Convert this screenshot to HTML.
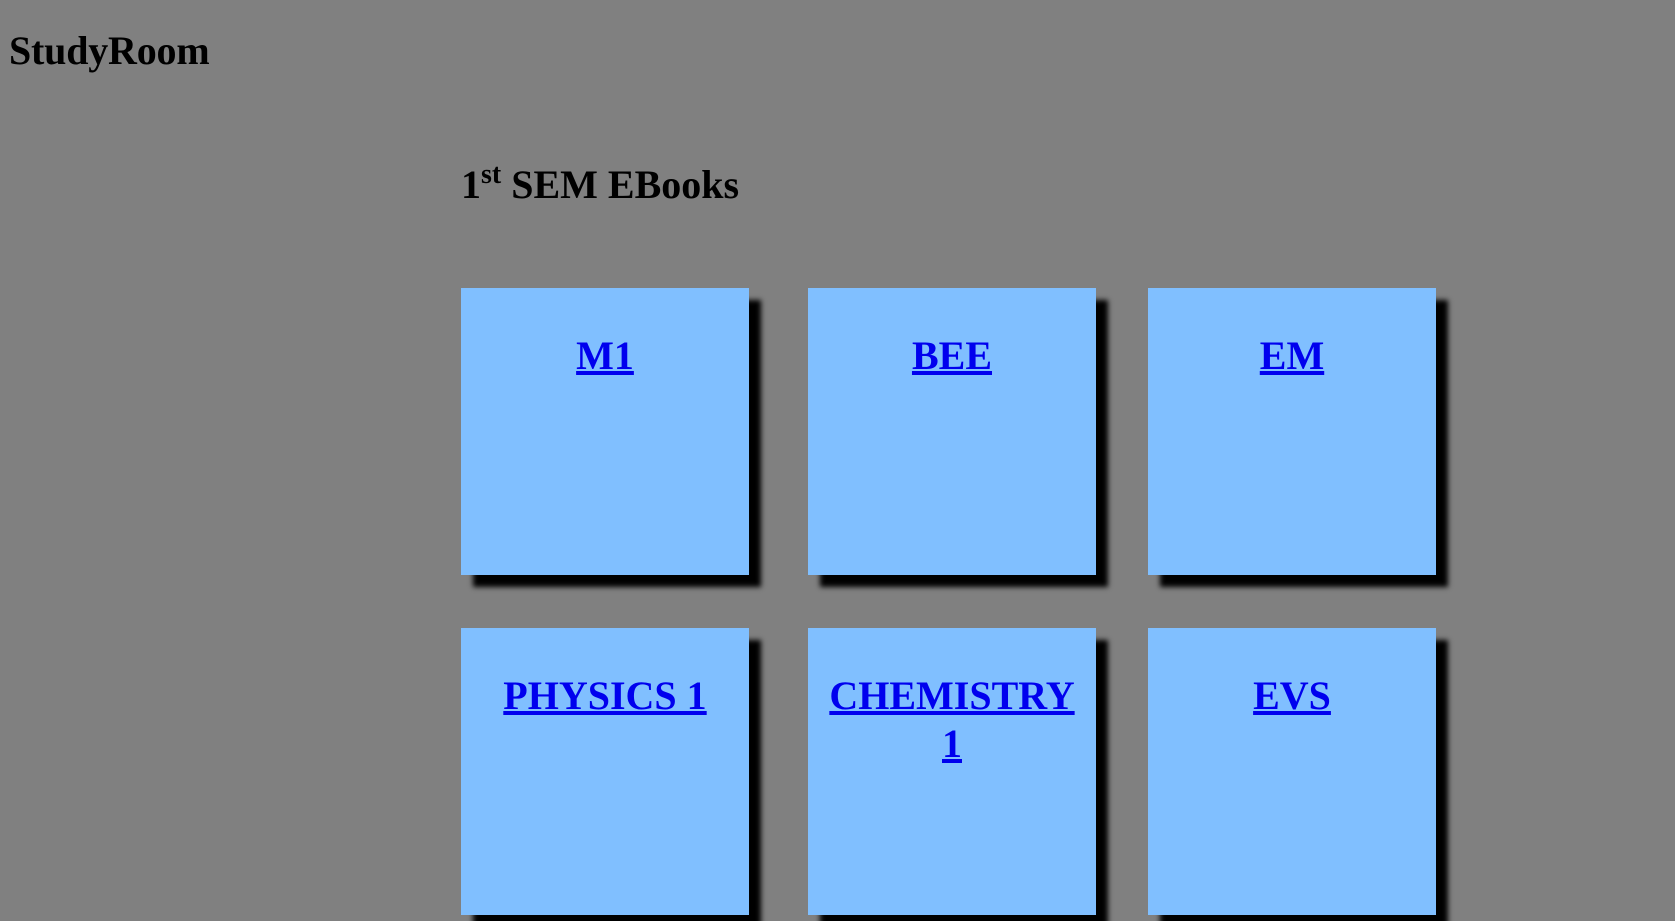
<!DOCTYPE html>
<html><head><style>
html,body{margin:0;padding:0;background:#808080;width:1675px;height:921px;overflow:hidden;font-family:"Liberation Serif",serif;}
.logo{position:absolute;left:9px;top:27px;font-size:40px;font-weight:bold;color:#000;margin:0;line-height:48px;letter-spacing:-0.2px;}
.title{position:absolute;left:461px;top:157px;font-size:40px;font-weight:bold;color:#000;line-height:56px;margin:0;}
.title sup{font-size:28px;vertical-align:top;position:relative;top:-10px;}
.box{position:absolute;width:288px;height:287px;background:#80bfff;box-shadow:12px 12px 5px #000;text-align:center;box-sizing:border-box;padding:0 18px;}
.box a{display:block;margin-top:44px;font-size:40px;font-weight:bold;color:#0000ee;text-decoration:underline;line-height:48px;}
</style></head><body>
<div class="logo">StudyRoom</div>
<div class="title">1<sup>st</sup> SEM EBooks</div>
<div class="box" style="left:461px;top:288px"><a>M1</a></div>
<div class="box" style="left:808px;top:288px"><a>BEE</a></div>
<div class="box" style="left:1148px;top:288px"><a>EM</a></div>
<div class="box" style="left:461px;top:628px"><a>PHYSICS 1</a></div>
<div class="box" style="left:808px;top:628px"><a>CHEMISTRY 1</a></div>
<div class="box" style="left:1148px;top:628px"><a>EVS</a></div>
</body></html>
